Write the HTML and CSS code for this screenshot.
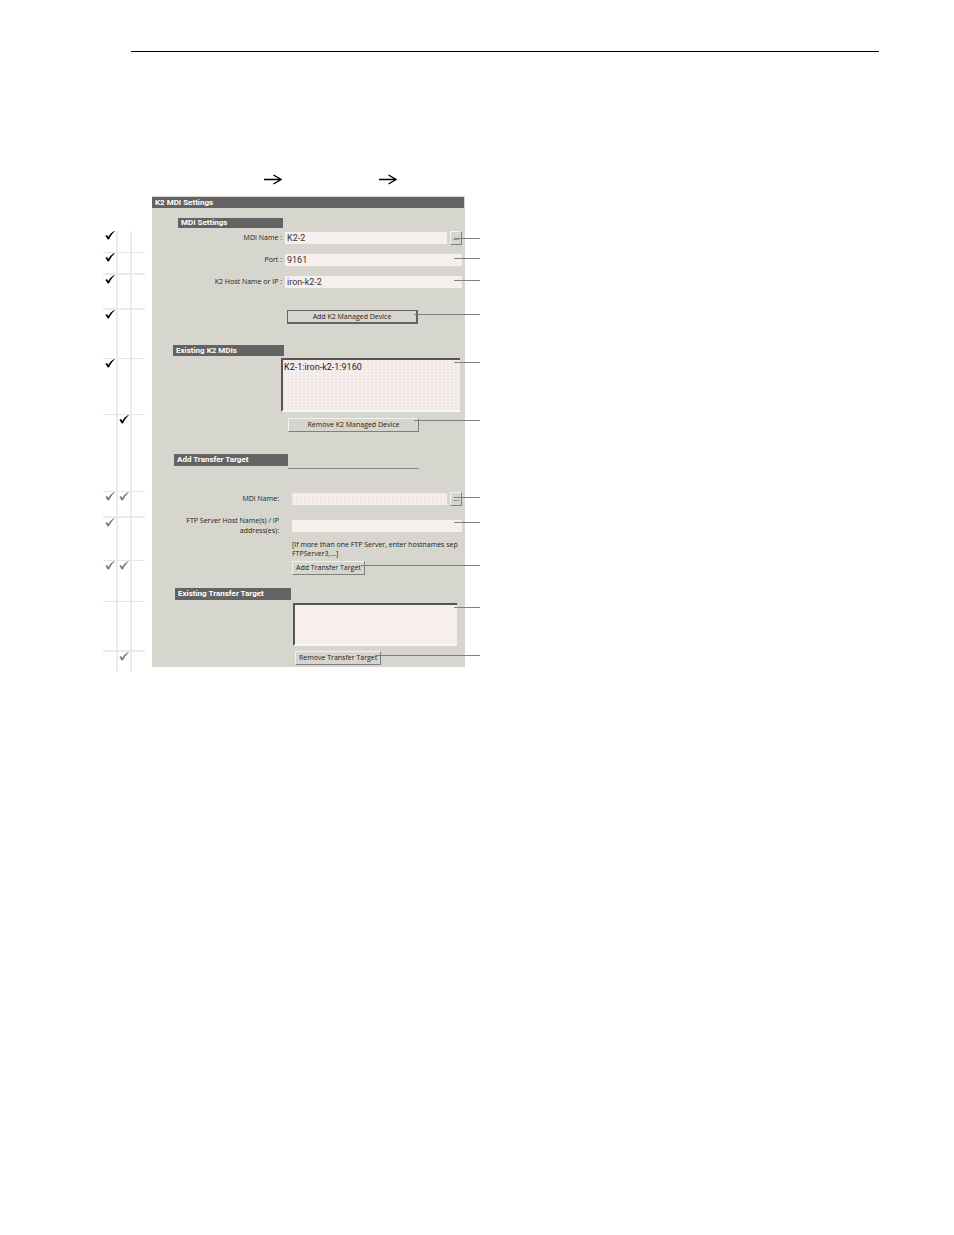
FILE: index.html
```html
<!DOCTYPE html>
<html lang="en">
<head>
    <meta charset="UTF-8">
    <meta name="viewport" content="width=device-width, initial-scale=1.0">
    <title>K2 MDI Settings</title>
    <link rel="stylesheet" href="styles.css">
</head>
<body>
    <svg class="symbols" aria-hidden="true">
        <symbol id="check" viewBox="0 0 10 9">
            <path d="M0.3 5 L2 4 L3.3 6 C4.6 3.6 6.6 1.4 9.2 0.1 L9.7 0.6 C7.4 2.6 5.4 5.2 4.1 8.2 L2.6 8.6 C2.1 7.3 1.4 5.9 0.3 5 Z"/>
        </symbol>
        <symbol id="arrow" viewBox="0 0 18 12">
            <path d="M0 5.5 H17 M9.5 1 L17 5.5 L9.5 10" fill="none" stroke="#000" stroke-width="1.4"/>
        </symbol>
    </svg>

    <hr class="page-rule">

    <div class="path">
        <svg class="arrow"><use href="#arrow"/></svg>
        <svg class="arrow"><use href="#arrow"/></svg>
    </div>

    <main class="figure">
        <table class="checks">
            <tr class="h21"><td><svg><use href="#check"/></svg></td><td></td><td></td></tr>
            <tr class="h21"><td><svg><use href="#check"/></svg></td><td></td><td></td></tr>
            <tr class="h35 thick"><td><svg><use href="#check"/></svg></td><td></td><td></td></tr>
            <tr class="h50 thick"><td><svg><use href="#check"/></svg></td><td></td><td></td></tr>
            <tr class="h56"><td><svg><use href="#check"/></svg></td><td></td><td></td></tr>
            <tr class="h77"><td></td><td><svg><use href="#check"/></svg></td><td></td></tr>
            <tr class="h25 optional"><td><svg><use href="#check"/></svg></td><td><svg><use href="#check"/></svg></td><td></td></tr>
            <tr class="h44 thick optional"><td><svg><use href="#check"/></svg></td><td></td><td></td></tr>
            <tr class="h41 optional"><td><svg><use href="#check"/></svg></td><td><svg><use href="#check"/></svg></td><td></td></tr>
            <tr class="h49"><td></td><td></td><td></td></tr>
            <tr class="h22 thick optional"><td></td><td><svg><use href="#check"/></svg></td><td></td></tr>
        </table>

        <form class="panel">
            <h1 class="panel-title">K2 MDI Settings</h1>

            <section class="mdi">
                <h2 class="heading">MDI Settings</h2>
                <div class="row">
                    <label for="mdi-name">MDI Name :</label>
                    <input type="text" id="mdi-name" value="K2-2">
                    <button type="button" class="browse">...</button>
                    <span class="callout middle"></span>
                </div>
                <div class="row">
                    <label for="port">Port :</label>
                    <input type="text" id="port" value="9161">
                    <span class="callout"></span>
                </div>
                <div class="row">
                    <label for="host">K2 Host Name or IP :</label>
                    <input type="text" id="host" value="iron-k2-2">
                    <span class="callout"></span>
                </div>
                <div class="row action">
                    <button type="button" class="wide default">Add K2 Managed Device</button>
                    <span class="callout long"></span>
                </div>
            </section>

            <section class="existing-mdi">
                <h2 class="heading"><label for="mdi-list">Existing K2 MDIs</label></h2>
                <div class="row list">
                    <select id="mdi-list" class="dotted" size="4">
                        <option>K2-1:iron-k2-1:9160</option>
                    </select>
                    <span class="callout"></span>
                </div>
                <div class="row action">
                    <button type="button" class="wide">Remove K2 Managed Device</button>
                    <span class="callout long high"></span>
                </div>
            </section>

            <section class="target">
                <h2 class="heading">Add Transfer Target</h2>
                <hr class="divider">
                <div class="row">
                    <label for="target-name">MDI Name:</label>
                    <input type="text" id="target-name" class="dotted">
                    <button type="button" class="browse">...</button>
                    <span class="callout"></span>
                </div>
                <div class="row tall">
                    <label for="ftp">FTP Server Host Name(s) / IP address(es):</label>
                    <input type="text" id="ftp">
                    <span class="callout middle"></span>
                </div>
                <p class="hint">[If more than one FTP Server, enter hostnames sep<br>FTPServer3,...]</p>
                <div class="row action">
                    <button type="button">Add Transfer Target</button>
                    <span class="callout longest"></span>
                </div>
            </section>

            <section class="existing-target">
                <h2 class="heading"><label for="target-list">Existing Transfer Target</label></h2>
                <div class="row list">
                    <select id="target-list" size="4"></select>
                    <span class="callout"></span>
                </div>
                <div class="row action">
                    <button type="button">Remove Transfer Target</button>
                    <span class="callout longer"></span>
                </div>
            </section>
        </form>
    </main>
</body>
</html>
```
FILE: styles.css
```css
* {
    box-sizing: border-box;
}

body {
    margin: 0;
    background-color: #fff;
    color: #222;
    font-family: "Open Sans", "Liberation Sans", sans-serif;
    font-size: 7px;
    line-height: 10px;
}

.symbols {
    display: none;
}

.page-rule {
    height: 1px;
    margin: 51px 75px 0 131px;
    border: 0;
    background-color: #000;
}

.path {
    display: flex;
    gap: 97px;
    margin: 122px 0 10px 264px;
}

.arrow {
    width: 18px;
    height: 12px;
}

.figure {
    display: flex;
    align-items: flex-start;
    gap: 7px;
    max-width: 465px;
    padding-left: 103px;
}

/* check columns */
.checks {
    flex: none;
    margin-top: 35px;
    border-collapse: separate;
    border-spacing: 0;
}

.checks td {
    width: 13px;
    padding: 0;
    border-top: 1px solid #e6e6e6;
    vertical-align: top;
}

.checks .thick td {
    border-top: 2px solid #ebebeb;
}

.checks td + td {
    width: 14px;
    border-left: 2px solid #ebebeb;
}

.checks td:last-child {
    width: 15px;
}

.checks tr:first-child td {
    border-top: 0;
}

.checks svg {
    display: block;
    width: 10px;
    height: 9px;
    margin-left: 2px;
}

.checks td + td svg {
    margin-left: 1px;
}

.optional svg {
    fill: #777;
}

.h21 { height: 21px; }
.h22 { height: 22px; }
.h25 { height: 25px; }
.h35 { height: 35px; }
.h41 { height: 41px; }
.h44 { height: 44px; }
.h49 { height: 49px; }
.h50 { height: 50px; }
.h56 { height: 56px; }
.h77 { height: 77px; }

/* settings panel */
.panel {
    flex: 1;
    min-width: 0;
    padding: 1px 0 2px;
    background-color: #d6d6ce;
}

.panel-title,
.heading {
    margin: 0;
    padding-left: 3px;
    background-color: #636363;
    color: #fff;
    font-family: Roboto, "Liberation Sans", sans-serif;
    font-size: 8px;
    font-weight: bold;
    line-height: 11px;
}

.panel-title {
    margin-right: 1px;
}

.heading label {
    display: block;
}

.row {
    position: relative;
    display: flex;
    align-items: center;
    height: 12px;
    padding-right: 3px;
}

.row label {
    flex: none;
    text-align: right;
}

input {
    flex: 1;
    min-width: 0;
    height: 12px;
    margin: 0;
    padding: 0 2px;
    border: 0;
    background-color: #f7eeee;
    color: #333;
    font-family: Roboto, "Liberation Sans", sans-serif;
    font-size: 9px;
}

button {
    height: 14px;
    padding: 0 3px;
    border: 1px solid;
    border-color: #f2f2ee #808080 #808080 #f2f2ee;
    background-color: #d6d6ce;
    color: #222;
    font-family: inherit;
    font-size: 7px;
    line-height: 10px;
    white-space: nowrap;
}

.browse {
    width: 12px;
    margin-left: 3px;
    padding: 0;
}

.wide {
    width: 131px;
}

.default {
    border-color: #636363;
    border-width: 1px 2px 2px 1px;
}

select {
    width: 100%;
    height: 100%;
    padding: 2px 0;
    border: 2px solid;
    border-color: #555 #f7f7f4 #f7f7f4 #555;
    border-right-width: 0;
    border-radius: 0;
    background-color: #f7eeee;
    color: #222;
    font-family: Roboto, "Liberation Sans", sans-serif;
    font-size: 9px;
    overflow: hidden;
}

option {
    min-height: 0;
    padding: 0 1px;
    line-height: 12px;
}

.dotted {
    background-image: radial-gradient(circle at 1px 1px, #f0e4e4 1px, transparent 1px);
    background-size: 4px 3px;
}

.action {
    height: 14px;
}

/* leader lines run past the right edge of the panel */
.callout {
    position: absolute;
    top: 4px;
    right: -15px;
    width: 26px;
    height: 1px;
    background-color: #808080;
}

.callout.middle {
    top: 6px;
}

.callout.high {
    top: 2px;
}

.callout.long {
    width: 66px;
}

.callout.longer {
    width: 104px;
}

.callout.longest {
    width: 119px;
}

/* MDI Settings */
.mdi .heading {
    width: 105px;
    margin: 10px 0 4px 26px;
    line-height: 10px;
}

.mdi label {
    width: 130px;
    margin-right: 3px;
}

.mdi .row {
    margin-bottom: 10px;
}

.mdi .action {
    margin-top: 22px;
    margin-bottom: 0;
    padding-left: 135px;
}

/* Existing K2 MDIs */
.existing-mdi .heading {
    width: 111px;
    margin: 21px 0 2px 21px;
}

.existing-mdi .list {
    height: 54px;
    padding: 0 5px 0 129px;
}

.existing-mdi .action {
    margin-top: 6px;
    padding-left: 136px;
}

/* Add Transfer Target */
.target .heading {
    width: 114px;
    margin: 22px 0 2px 22px;
    line-height: 12px;
}

.divider {
    width: 131px;
    height: 1px;
    margin: 0 0 24px 136px;
    border: 0;
    background-color: #888;
}

.target label {
    width: 127px;
    margin-right: 13px;
    padding-left: 20px;
}

.target .tall {
    height: 20px;
    margin-top: 11px;
}

.hint {
    margin: 4px 0 3px 140px;
    line-height: 9px;
    white-space: nowrap;
}

.target .action {
    padding-left: 140px;
}

/* Existing Transfer Target */
.existing-target .heading {
    width: 116px;
    margin: 13px 0 3px 23px;
    line-height: 12px;
}

.existing-target .list {
    height: 43px;
    padding: 0 8px 0 141px;
}

.existing-target .action {
    margin-top: 5px;
    padding-left: 143px;
}
```
